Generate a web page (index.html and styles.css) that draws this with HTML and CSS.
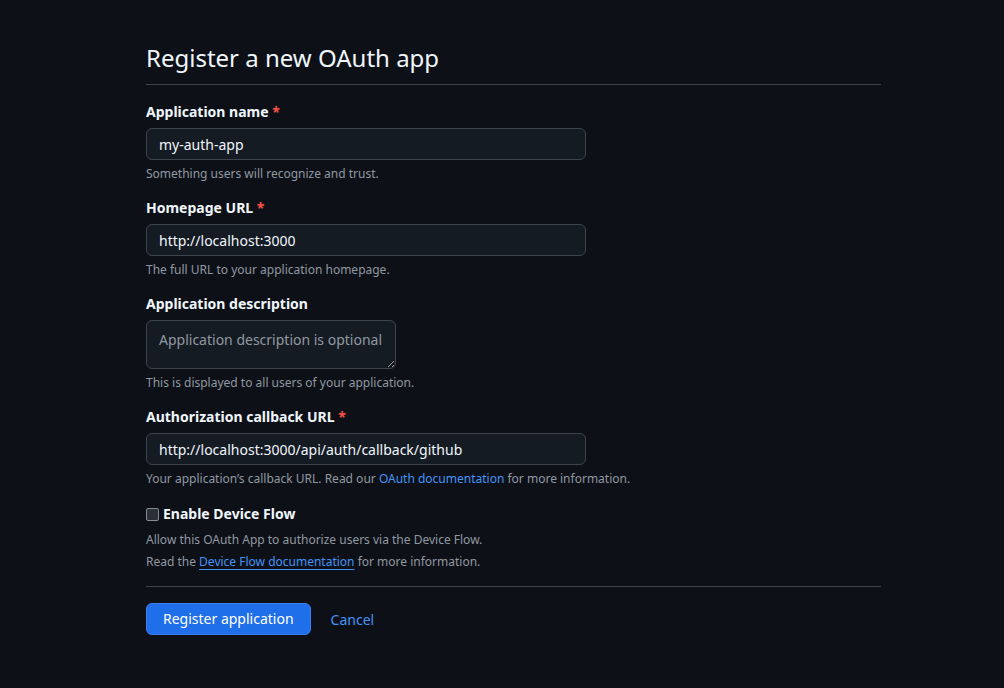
FILE: index.html
```html
<!DOCTYPE html>
<html lang="en">
<head>
<meta charset="utf-8">
<title>Register a new OAuth app</title>
<link rel="stylesheet" href="styles.css">
</head>
<body>
<main class="page">
  <h1 class="title">Register a new OAuth app</h1>
  <form class="form">
    <div class="field">
      <label class="label">Application name <span class="req">*</span></label>
      <input class="input" type="text" value="my-auth-app">
      <p class="note">Something users will recognize and trust.</p>
    </div>
    <div class="field">
      <label class="label">Homepage URL <span class="req">*</span></label>
      <input class="input" type="text" value="http://localhost:3000">
      <p class="note">The full URL to your application homepage.</p>
    </div>
    <div class="field">
      <label class="label">Application description</label>
      <textarea class="textarea" placeholder="Application description is optional"></textarea>
      <p class="note">This is displayed to all users of your application.</p>
    </div>
    <div class="field">
      <label class="label">Authorization callback URL <span class="req">*</span></label>
      <input class="input" type="text" value="http://localhost:3000/api/auth/callback/github">
      <p class="note">Your application’s callback URL. Read our <a class="link" href="#">OAuth documentation</a> for more information.</p>
    </div>
    <div class="field check-field">
      <label class="check-label"><input class="checkbox" type="checkbox"> Enable Device Flow</label>
      <p class="note note-tall first">Allow this OAuth App to authorize users via the Device Flow.</p>
      <p class="note note-tall">Read the <a class="link underline" href="#">Device Flow documentation</a> for more information.</p>
    </div>
    <div class="actions">
      <button class="btn-primary" type="button">Register application</button>
      <a class="cancel" href="#">Cancel</a>
    </div>
  </form>
</main>
</body>
</html>
```
FILE: styles.css
```css
* { box-sizing: border-box; }
html, body {
  margin: 0;
  background: #0d1117;
  color: #f0f6fc;
  font-family: "Noto Sans", "Liberation Sans", sans-serif;
}
.page {
  width: 735px;
  margin-left: 146px;
  padding-top: 40px;
}
.title {
  margin: 0;
  font-size: 24px;
  font-weight: 400;
  line-height: 36px;
  padding-bottom: 8px;
  border-bottom: 1px solid #3d444d;
  color: #f0f6fc;
}
.form { padding-top: 17px; }
.field { margin-bottom: 15px; display: flex; flex-direction: column; align-items: flex-start; }
.label {
  font-size: 14px;
  font-weight: 700;
  line-height: 20px;
  margin-bottom: 6px;
}
.req { color: #f85149; }
.input, .textarea {
  width: 440px;
  height: 32px;
  padding: 0 12px;
  background: #151b23;
  border: 1px solid #3d444d;
  border-radius: 6px;
  color: #f0f6fc;
  font-family: "Noto Sans", "Liberation Sans", sans-serif;
  font-size: 14px;
  outline: none;
}
.textarea {
  width: 250px;
  height: 49px;
  padding: 8px 12px;
  line-height: 22px;
  resize: vertical;
}
.textarea::placeholder { color: #9198a1; }
.note {
  margin: 5px 0 0;
  font-size: 12px;
  line-height: 18px;
  color: #9198a1;
}
.link { color: #4493f8; text-decoration: none; }
.link.underline { text-decoration: underline; text-underline-offset: 3px; }
.check-field { margin-bottom: 13px; }
.check-label {
  display: flex;
  align-items: center;
  gap: 4px;
  font-size: 14px;
  font-weight: 700;
  line-height: 20px;
  margin-top: 1px;
}
.checkbox {
  appearance: none;
  width: 13px;
  height: 13px;
  margin: 0;
  background: #2a3038;
  border: 1px solid #858c94;
  border-radius: 2px;
}
.note-tall { line-height: 22px; margin: 0; }
.note-tall.first { margin-top: 5px; }
.actions {
  border-top: 1px solid #3d444d;
  padding-top: 16px;
  display: flex;
  align-items: center;
  gap: 20px;
}
.btn-primary {
  height: 32px;
  padding: 0 16px 1px;
  background: #1f6feb;
  color: #ffffff;
  border: 1px solid #3a80ef;
  border-radius: 6px;
  font-family: "Noto Sans", "Liberation Sans", sans-serif;
  font-size: 14px;
  font-weight: 400;
}
.cancel {
  color: #4493f8;
  text-decoration: none;
  font-size: 14px;
}
```
